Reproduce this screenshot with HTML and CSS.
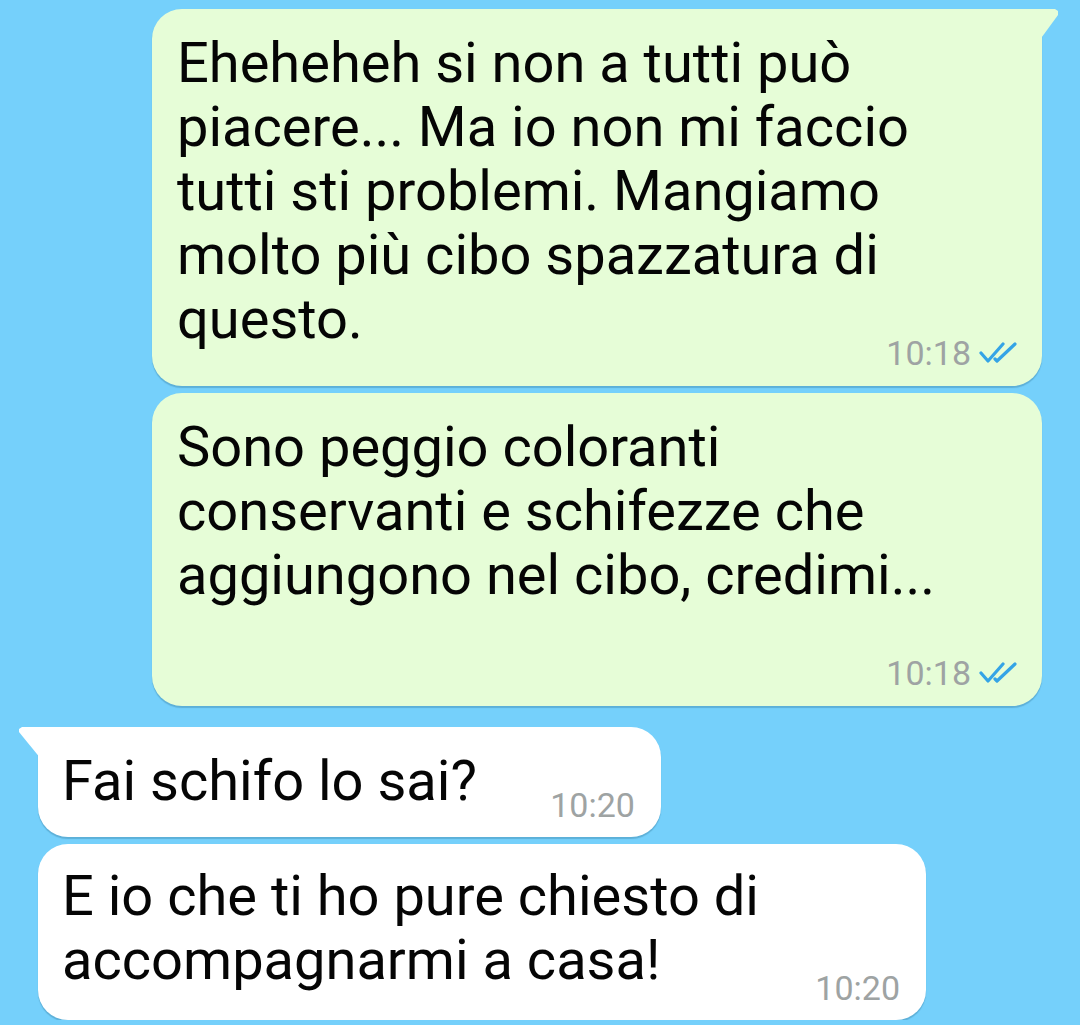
FILE: index.html
```html
<!DOCTYPE html>
<html lang="it">
  <head>
    <meta charset="utf-8">
    <title>Chat</title>
    <link rel="stylesheet" href="styles.css">
  </head>
  <body>
    <div class="chat">
      <div class="msg out tail">
        <p class="text">Eheheheh si non a tutti può piacere... Ma io non mi faccio tutti sti problemi. Mangiamo molto più cibo spazzatura di questo.<span class="spacer"></span></p>
        <span class="meta">10:18 <svg class="ticks" viewBox="0 0 40 22"><path d="M2 11 L9 19 L24 2 M16 17 L18 19 L36 2"/></svg></span>
      </div>
      <div class="msg out">
        <p class="text">Sono peggio coloranti conservanti e schifezze che aggiungono nel cibo, credimi...<span class="spacer"></span></p>
        <span class="meta">10:18 <svg class="ticks" viewBox="0 0 40 22"><path d="M2 11 L9 19 L24 2 M16 17 L18 19 L36 2"/></svg></span>
      </div>
      <div class="msg in tail first">
        <p class="text">Fai schifo lo sai?<span class="spacer"></span></p>
        <span class="meta">10:20</span>
      </div>
      <div class="msg in wide">
        <p class="text">E io che ti ho pure chiesto di accompagnarmi a casa!<span class="spacer"></span></p>
        <span class="meta">10:20</span>
      </div>
    </div>
  </body>
</html>
```
FILE: styles.css
```css
html, body {
  margin: 0;
  padding: 0;
}
body {
  --bg-color: #75d0fb;
  --out-bg: #e6fdd7;
  --in-bg: #ffffff;
  --text-color: #050505;
  --meta-color: #9ea3a3;
  --tick-color: #34a4e6;
  background: var(--bg-color);
  color: var(--text-color);
  font-family: Roboto, "Noto Sans", sans-serif;
  overflow: hidden;
}

.chat {
  display: flex;
  flex-direction: column;
  gap: 7px;
  padding: 9px 38px 0;
}

.msg {
  position: relative;
  box-sizing: border-box;
  max-width: 890px;
  padding: 22px 25px 35px;
  border-radius: 30px;
  box-shadow: 0 2px 1px rgba(20, 80, 110, 0.25);
}
.msg.out {
  align-self: flex-end;
  width: 890px;
  background: var(--out-bg);
}
.msg.in {
  align-self: flex-start;
  padding: 22px 26px 24px 24px;
  background: var(--in-bg);
}
.msg.in.first {
  margin-top: 14px;
}
.msg.in.wide {
  width: 888px;
  padding-top: 20px;
  padding-bottom: 28px;
}

.msg.tail.out {
  border-top-right-radius: 0;
}
.msg.tail.in {
  border-top-left-radius: 0;
}
.msg.tail::before {
  content: "";
  position: absolute;
  top: 0;
  width: 22px;
  height: 32px;
  background: inherit;
}
.msg.tail.out::before {
  right: -19px;
  clip-path: polygon(0 0, 16px 0, 19px 2px, 19px 6px, 0 32px);
}
.msg.tail.in::before {
  left: -19px;
  clip-path: polygon(3px 0, 22px 0, 22px 32px, 0 5px, 0 2px);
}

.text {
  margin: 0;
  font-size: 56px;
  line-height: 64px;
}
.spacer {
  display: inline-block;
  width: 160px;
}
.msg.in .spacer {
  width: 158px;
}

.meta {
  position: absolute;
  right: 23px;
  bottom: 13px;
  display: flex;
  align-items: center;
  gap: 8px;
  font-size: 34px;
  line-height: 40px;
  color: var(--meta-color);
}
.msg.in .meta {
  right: 26px;
  bottom: 12px;
}
.ticks {
  width: 40px;
  height: 22px;
  fill: none;
  stroke: var(--tick-color);
  stroke-width: 3.2;
  stroke-linecap: round;
  stroke-linejoin: round;
}
```
